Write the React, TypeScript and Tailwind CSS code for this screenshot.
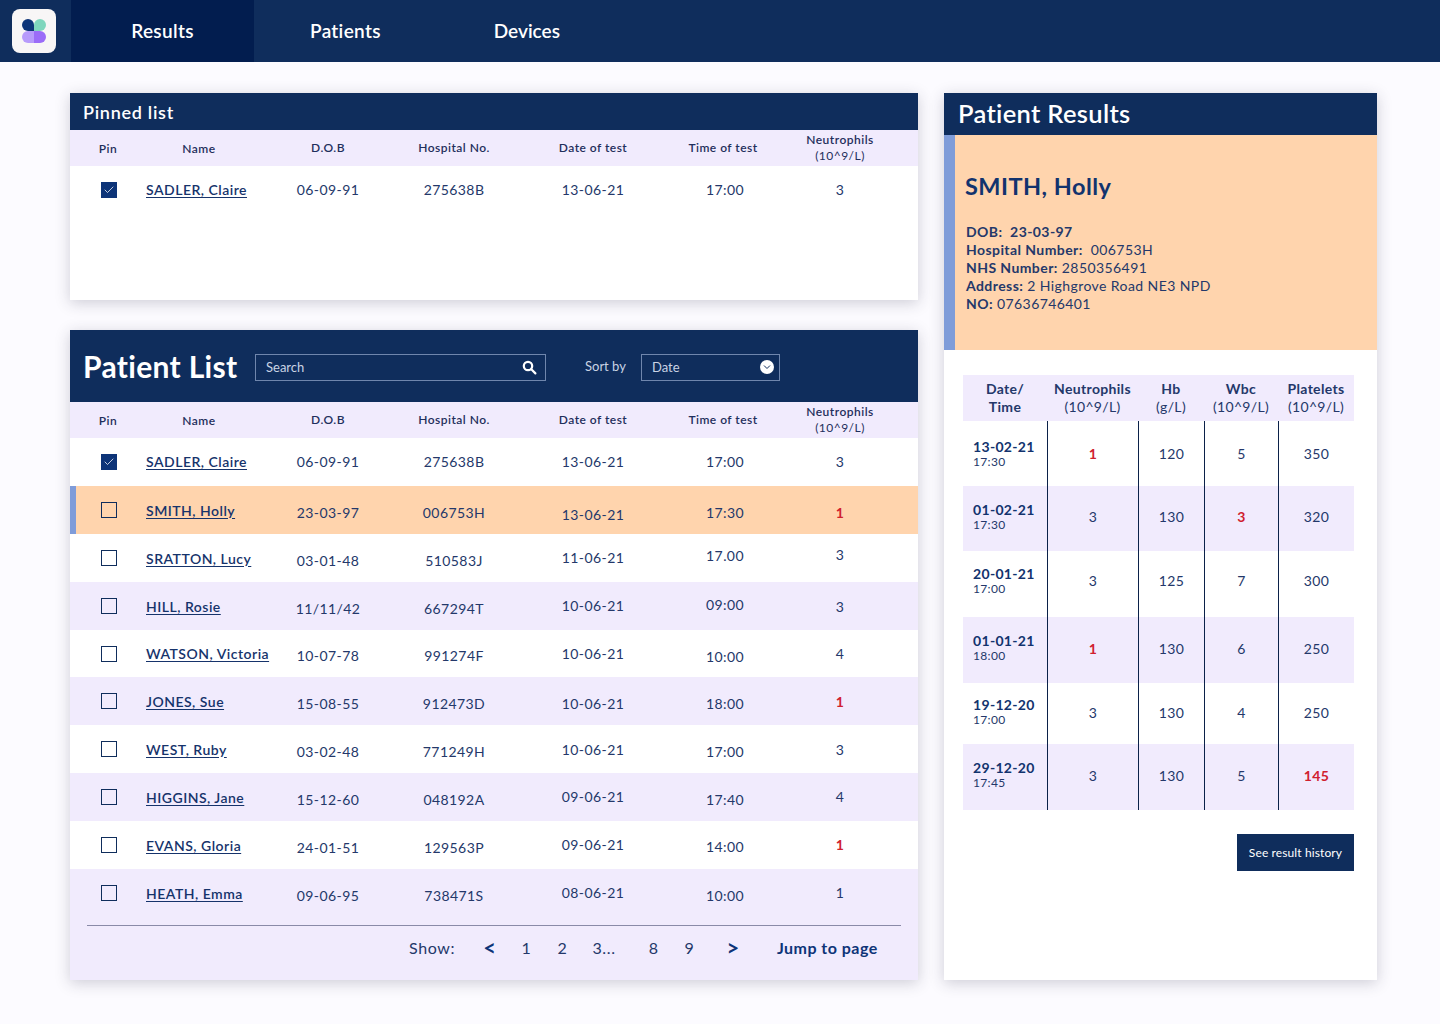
import { Check } from "lucide-react";

const navy = "text-[#12336e]";

type Row = {
  name: string;
  dob: string;
  hosp: string;
  date: string;
  time: string;
  neu: string;
  alt?: boolean;
  active?: boolean;
  checked?: boolean;
  short?: boolean;
  dateCls?: string;
  timeCls?: string;
  neuCls?: string;
  low?: boolean;
};

// the reference has uneven baselines per cell, pt shifts down, pb shifts up
const rows: Row[] = [
  { name: "SADLER, Claire", dob: "06-09-91", hosp: "275638B", date: "13-06-21", time: "17:00", neu: "3", checked: true },
  { name: "SMITH, Holly", dob: "23-03-97", hosp: "006753H", date: "13-06-21", time: "17:30", neu: "1", active: true, low: true, dateCls: "pt-[10px]", timeCls: "pt-[6px]", neuCls: "pt-[6px]" },
  { name: "SRATTON, Lucy", dob: "03-01-48", hosp: "510583J", date: "11-06-21", time: "17.00", neu: "3", timeCls: "pb-1", neuCls: "pb-[6px]" },
  { name: "HILL, Rosie", dob: "11/11/42", hosp: "667294T", date: "10-06-21", time: "09:00", neu: "3", alt: true, timeCls: "pb-[2px]", neuCls: "pt-[2px]" },
  { name: "WATSON, Victoria", dob: "10-07-78", hosp: "991274F", date: "10-06-21", time: "10:00", neu: "4", short: true, dateCls: "pt-[2px]", timeCls: "pt-2", neuCls: "pt-[2px]" },
  { name: "JONES, Sue", dob: "15-08-55", hosp: "912473D", date: "10-06-21", time: "18:00", neu: "1", alt: true, low: true, dateCls: "pt-[6px]", timeCls: "pt-[6px]", neuCls: "pt-[2px]" },
  { name: "WEST, Ruby", dob: "03-02-48", hosp: "771249H", date: "10-06-21", time: "17:00", neu: "3", dateCls: "pt-[2px]", timeCls: "pt-[6px]", neuCls: "pt-[2px]" },
  { name: "HIGGINS, Jane", dob: "15-12-60", hosp: "048192A", date: "09-06-21", time: "17:40", neu: "4", alt: true, timeCls: "pt-[6px]" },
  { name: "EVANS, Gloria", dob: "24-01-51", hosp: "129563P", date: "09-06-21", time: "14:00", neu: "1", low: true, timeCls: "pt-1" },
  { name: "HEATH, Emma", dob: "09-06-95", hosp: "738471S", date: "08-06-21", time: "10:00", neu: "1", alt: true, timeCls: "pt-[6px]" },
];

const cols = "grid grid-cols-[76px_106px_152px_100px_178px_86px_144px]";

function Checkbox({ checked }: { checked?: boolean }) {
  if (checked) {
    return (
      <span className="flex h-4 w-4 items-center justify-center bg-[#0d3478]">
        <Check size={12} strokeWidth={1.5} color="#ffffff" />
      </span>
    );
  }
  return <span className="block h-4 w-4 border border-[#0f2d5c]" />;
}

function HeadRow() {
  return (
    <div className={`${cols} h-9 items-center bg-[#f1ebfd] text-center text-[12px] font-semibold tracking-[0.04em] text-[#1f2f5c]`}>
      <div className="pt-[2px]">Pin</div>
      <div className="pt-[2px]">Name</div>
      <div>D.O.B</div>
      <div>Hospital No.</div>
      <div>Date of test</div>
      <div className="pr-1">Time of test</div>
      <div className="leading-[16px]">
        <div>Neutrophils</div>
        <div className="font-normal">(10^9/L)</div>
      </div>
    </div>
  );
}

function PatientRow({ row }: { row: Row }) {
  let bg = "bg-white";
  if (row.alt) bg = "bg-[#f1ebfd]";
  if (row.active) bg = "bg-[#ffd4ad]";
  const first = row.name === "SADLER, Claire";
  const nudge = first ? "" : "pt-[6px]";
  return (
    <div className={`${cols} ${row.short ? "h-[47px]" : "h-12"} items-center pb-[2px] text-center text-[14px] tracking-[0.03em] text-[#24386a] ${bg} ${row.active ? "relative" : ""}`}>
      {row.active && <span className="absolute left-0 top-0 h-full w-[6px] bg-[#7f9cd9]" />}
      <div className="flex justify-center pl-[2px] pt-[2px]">
        <Checkbox checked={row.checked} />
      </div>
      <div className={`whitespace-nowrap text-left font-semibold tracking-[0.035em] underline underline-offset-2 text-[#16336b] ${first ? "" : "pt-[2px]"}`}>
        {row.name}
      </div>
      <div className={nudge}>{row.dob}</div>
      <div className={nudge}>{row.hosp}</div>
      <div className={row.dateCls}>{row.date}</div>
      <div className={row.timeCls}>{row.time}</div>
      <div className={`${row.neuCls ?? ""} ${row.low ? "font-bold text-[#d0202e]" : ""}`}>{row.neu}</div>
    </div>
  );
}

function PinnedList() {
  return (
    <section className="h-[207px] bg-white shadow-[0_3px_14px_rgba(40,40,70,0.22)]">
      <div className="flex h-[37px] items-center bg-[#0f2d5c] pl-[13px] pt-[2px] text-[18px] font-semibold tracking-[0.04em] text-white">Pinned list</div>
      <HeadRow />
      <PatientRow row={rows[0]} />
    </section>
  );
}

function PatientList() {
  return (
    <section className="h-[650px] bg-[#f1ebfd] shadow-[0_3px_14px_rgba(40,40,70,0.22)]">
      <div className="flex h-[72px] items-center bg-[#0f2d5c] pl-[13px] text-white">
        <h1 className="w-[172px] text-[30px] font-bold">Patient List</h1>
        <div className="mt-[2px] flex h-[27px] w-[291px] items-center justify-between border border-[#6f86ad] pl-[10px] pr-[8px] text-[13px] tracking-normal text-[#c9d3e4]">
          <span className="pt-[2px]">Search</span>
          <svg width="15" height="15" viewBox="0 0 15 15" fill="none" stroke="#ffffff" strokeWidth="2.2" strokeLinecap="round">
            <circle cx="6" cy="6" r="4.2" />
            <path d="M9.3 9.3L13.4 13.4" />
          </svg>
        </div>
        <span className="ml-[39px] mt-[2px] text-[13px] tracking-normal text-[#c9d3e4]">Sort by</span>
        <div className="ml-[15px] mt-[2px] flex h-[27px] w-[139px] items-center justify-between border border-[#6f86ad] pl-[10px] pr-[5px] text-[13px] tracking-normal text-[#c9d3e4]">
          <span className="pt-[2px]">Date</span>
          <span className="flex h-[14px] w-[14px] items-center justify-center rounded-full bg-white">
            <svg width="8" height="8" viewBox="0 0 8 8" fill="none" stroke="#0f2d5c" strokeWidth="1">
              <path d="M1 2.5L4 5.5L7 2.5" />
            </svg>
          </span>
        </div>
      </div>
      <HeadRow />
      {rows.map((r) => (
        <PatientRow key={r.name} row={r} />
      ))}
      <div className="mx-[17px] mt-2 flex h-[46px] items-center border-t border-[#8a8aa8] pb-[2px] text-[16px] tracking-[0.04em] text-[#24386a]">
        <span className="ml-[322px]">Show:</span>
        <span className="ml-[28px] text-[22px] leading-none font-bold text-[#0d3478]">&lt;</span>
        <span className="ml-[25px]">1</span>
        <span className="ml-[26px]">2</span>
        <span className="ml-[25px]">3...</span>
        <span className="ml-[33px]">8</span>
        <span className="ml-[26px]">9</span>
        <span className="ml-[32px] text-[22px] leading-none font-bold text-[#0d3478]">&gt;</span>
        <span className="ml-[37px] font-bold tracking-[0.03em] text-[#0d3478]">Jump to page</span>
      </div>
    </section>
  );
}

const results = [
  { date: "13-02-21", time: "17:30", neu: "1", hb: "120", wbc: "5", pl: "350", h: "h-[65px]", pad: "", hot: "neu" },
  { date: "01-02-21", time: "17:30", neu: "3", hb: "130", wbc: "3", pl: "320", h: "h-[65px]", pad: "pb-1", hot: "wbc", alt: true },
  { date: "20-01-21", time: "17:00", neu: "3", hb: "125", wbc: "7", pl: "300", h: "h-[66px]", pad: "pb-[7px]" },
  { date: "01-01-21", time: "18:00", neu: "1", hb: "130", wbc: "6", pl: "250", h: "h-[66px]", pad: "pb-1", hot: "neu", alt: true },
  { date: "19-12-20", time: "17:00", neu: "3", hb: "130", wbc: "4", pl: "250", h: "h-[61px]", pad: "pb-[3px]" },
  { date: "29-12-20", time: "17:45", neu: "3", hb: "130", wbc: "5", pl: "145", h: "h-[66px]", pad: "pb-1", hot: "pl", alt: true },
];

const rcols = "grid grid-cols-[84px_91px_66px_74px_76px]";
const hotCls = "font-bold text-[#d0202e]";

function PatientResults() {
  return (
    <aside className="h-[887px] w-[433px] bg-white shadow-[0_3px_14px_rgba(40,40,70,0.22)]">
      <div className="flex h-[42px] items-center bg-[#0f2d5c] pb-[2px] pl-[14px] text-[25.5px] font-semibold text-white">Patient Results</div>
      <div className="flex h-[215px] border-l-[11px] border-[#7f9cd9] bg-[#ffd4ad] pl-[11px]">
        <div className="text-[14px] leading-[18px] tracking-[0.03em] text-[#24386a]">
          <h2 className={`mt-[36px] mb-[22px] -ml-px text-[23.5px] leading-[30px] font-bold tracking-[0.02em] ${navy}`}>SMITH, Holly</h2>
          <p className="font-bold">DOB:&nbsp; 23-03-97</p>
          <p><b className="font-bold">Hospital Number:</b>&nbsp; 006753H</p>
          <p><b className="font-bold">NHS Number:</b> 2850356491</p>
          <p><b className="font-bold">Address:</b> 2 Highgrove Road NE3 NPD</p>
          <p><b className="font-bold">NO:</b> 07636746401</p>
        </div>
      </div>
      <div className="ml-[19px] mr-[23px] mt-[25px]">
        <div className={`${rcols} h-[46px] items-center bg-[#f1ebfd] text-center text-[14px] leading-[18px] text-[#24386a]`}>
          <div className="font-bold">Date/<br />Time</div>
          <div><b className="font-bold">Neutrophils</b><br />(10^9/L)</div>
          <div><b className="font-bold">Hb</b><br />(g/L)</div>
          <div><b className="font-bold">Wbc</b><br />(10^9/L)</div>
          <div><b className="font-bold">Platelets</b><br />(10^9/L)</div>
        </div>
        {results.map((r) => (
          <div key={r.date} className={`${rcols} ${r.h} text-center text-[14px] text-[#24386a] ${r.alt ? "bg-[#f1ebfd]" : ""}`}>
            <div className={`flex flex-col justify-center pl-[10px] text-left ${r.pad}`}>
              <span className={`text-[14px] leading-[16px] font-bold ${navy}`}>{r.date}</span>
              <span className="text-[12px] leading-[14px]">{r.time}</span>
            </div>
            <div className={`flex items-center justify-center border-l border-[#0b2149] ${r.pad} ${r.hot === "neu" ? hotCls : ""}`}>{r.neu}</div>
            <div className={`flex items-center justify-center border-l border-[#0b2149] ${r.pad}`}>{r.hb}</div>
            <div className={`flex items-center justify-center border-l border-[#0b2149] ${r.pad} ${r.hot === "wbc" ? hotCls : ""}`}>{r.wbc}</div>
            <div className={`flex items-center justify-center border-l border-[#0b2149] ${r.pad} ${r.hot === "pl" ? hotCls : ""}`}>{r.pl}</div>
          </div>
        ))}
        <div className="mt-6 flex justify-end">
          <button className="h-[37px] w-[117px] bg-[#0f2d5c] text-[12px] tracking-[0.01em] text-white">See result history</button>
        </div>
      </div>
    </aside>
  );
}

function Logo() {
  return (
    <div className="ml-3 flex h-11 w-11 items-center justify-center rounded-lg bg-[#f8f6f6]">
      <svg width="24" height="24" viewBox="0 0 24 24">
        <path d="M0 6a6 6 0 0 1 12 0v6H6a6 6 0 0 1-6-6z" fill="#0d3478" />
        <path d="M12 6a6 6 0 0 1 12 0 6 6 0 0 1-6 6h-6z" fill="#7fd6bd" />
        <path d="M0 18a6 6 0 0 1 6-6h6v12H6a6 6 0 0 1-6-6z" fill="#b79bfb" />
        <path d="M12 12h6a6 6 0 0 1 0 12h-6z" fill="#9b6cf8" />
      </svg>
    </div>
  );
}

export default function App() {
  return (
    <div className="h-[1024px] w-[1440px] overflow-hidden bg-[#fcfbff] font-['Lato',sans-serif] tracking-[0.02em]">
      <header className="flex h-[62px] items-center bg-[#0f2d5c] text-[19px] font-semibold text-white">
        <Logo />
        <nav className="ml-[15px] flex h-full items-center">
          <a className="flex h-full w-[183px] items-center justify-center bg-[#021d4f]">Results</a>
          <a className="ml-[56px]">Patients</a>
          <a className="ml-[113px] tracking-normal">Devices</a>
        </nav>
      </header>
      <main className="flex gap-[26px] pl-[70px] pt-[31px]">
        <div className="flex w-[848px] flex-col gap-[30px]">
          <PinnedList />
          <PatientList />
        </div>
        <PatientResults />
      </main>
    </div>
  );
}
